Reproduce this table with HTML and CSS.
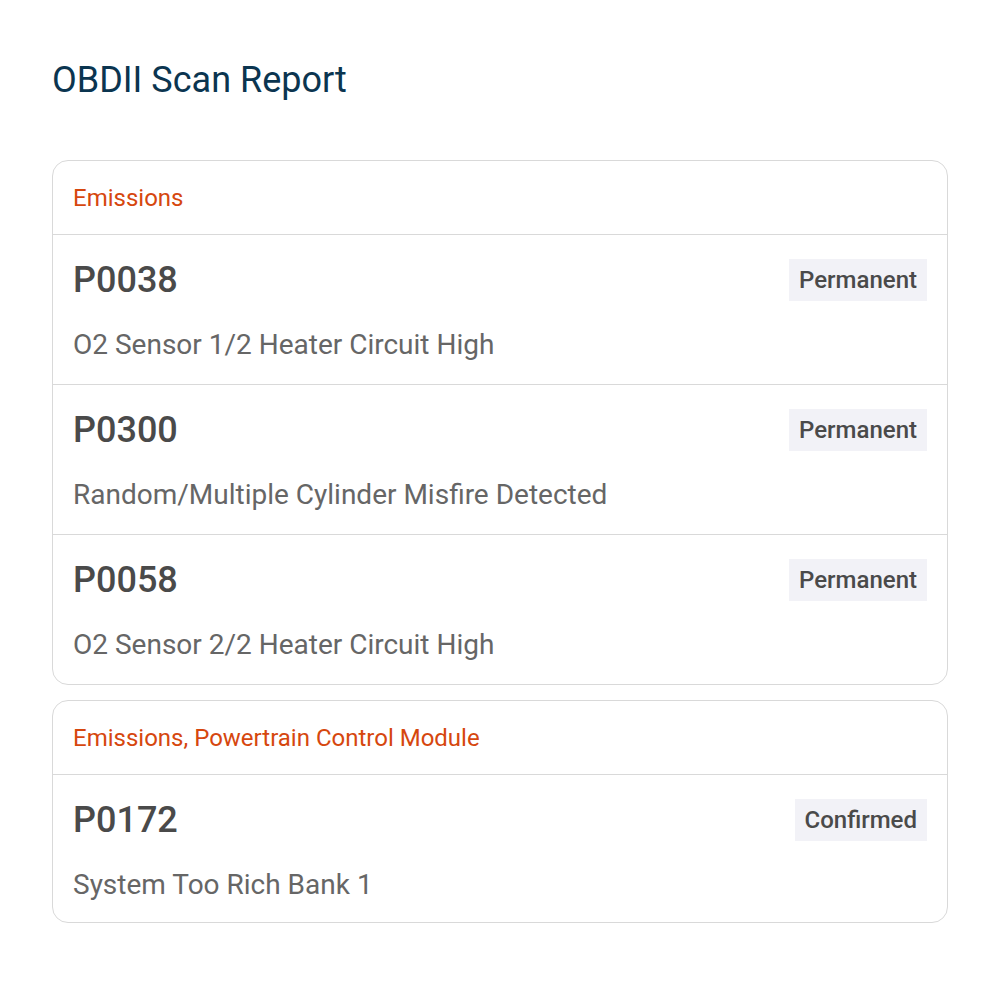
FILE: index.html
```html
<!DOCTYPE html>
<html lang="en">
<head>
  <meta charset="UTF-8" />
  <meta name="viewport" content="width=device-width, initial-scale=1.0"/>
  <title>OBDII Scan Report</title>
  <link rel="stylesheet" href="styles.css">
</head>
<body>
  <main class="report">
    <h1 class="report-title">OBDII Scan Report</h1>

    <section class="group">
      <div class="group-head">Emissions</div>

      <div class="code-row">
        <div class="code-top">
          <span class="code">P0038</span>
          <span class="badge">Permanent</span>
        </div>
        <div class="code-desc">O2 Sensor 1/2 Heater Circuit High</div>
      </div>

      <div class="code-row">
        <div class="code-top">
          <span class="code">P0300</span>
          <span class="badge">Permanent</span>
        </div>
        <div class="code-desc">Random/Multiple Cylinder Misfire Detected</div>
      </div>

      <div class="code-row">
        <div class="code-top">
          <span class="code">P0058</span>
          <span class="badge">Permanent</span>
        </div>
        <div class="code-desc">O2 Sensor 2/2 Heater Circuit High</div>
      </div>
    </section>

    <section class="group">
      <div class="group-head">Emissions, Powertrain Control Module</div>

      <div class="code-row">
        <div class="code-top">
          <span class="code">P0172</span>
          <span class="badge">Confirmed</span>
        </div>
        <div class="code-desc">System Too Rich Bank 1</div>
      </div>
    </section>
  </main>
</body>
</html>
```

FILE: styles.css
```css
body {
  margin: 0;
  padding: 0;
  font-family: Roboto, "Liberation Sans", sans-serif;
  background-color: #fff;
}

.report {
  padding: 56px 52px;
  display: flex;
  flex-direction: column;
  gap: 15px;
}

.report-title {
  margin: 0 0 41px;
  font-size: 36px;
  font-weight: 400;
  line-height: 48px;
  color: #0b3550;
}

.group {
  border: 1px solid #d9d9d9;
  border-radius: 16px;
  overflow: hidden;
}

.group-head {
  padding: 24px 20px 23px;
  font-size: 24px;
  line-height: 26px;
  color: #d6470e;
  border-bottom: 1px solid #d9d9d9;
}

.code-row {
  padding: 24px 20px 23px;
  border-bottom: 1px solid #d9d9d9;
}

.code-row:last-child {
  border-bottom: none;
}

.group:last-child .code-row {
  padding-bottom: 21px;
}

.code-top {
  display: flex;
  justify-content: space-between;
  align-items: center;
  height: 42px;
}

.code {
  font-size: 36px;
  font-weight: 500;
  color: #4a4a4a;
}

.badge {
  padding: 8px 10px;
  font-size: 24px;
  line-height: 26px;
  font-weight: 500;
  color: #4a4a4a;
  background: #f2f2f7;
}

.code-desc {
  margin-top: 28px;
  font-size: 28px;
  line-height: 32px;
  color: #666;
}
```
